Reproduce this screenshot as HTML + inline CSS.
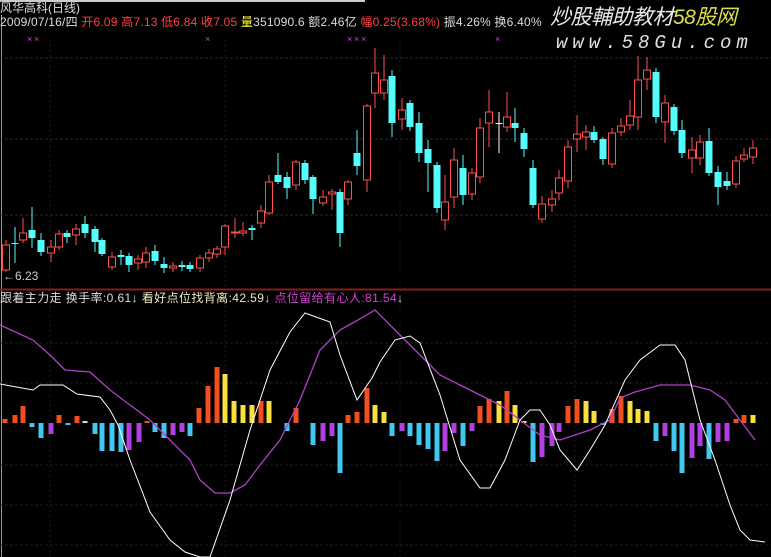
<!DOCTYPE html>
<html><head><meta charset="utf-8"><style>
html,body{margin:0;padding:0;background:#000;width:771px;height:557px;overflow:hidden}
body{position:relative;font-family:"Liberation Sans","Noto Sans CJK SC",sans-serif}
.t{position:absolute;font-size:12px;line-height:13px;white-space:nowrap;color:#ddd}
.r{color:#ff4040}.y{color:#ffff40}.m{color:#d040d0}
</style></head><body>
<svg id="s" width="771" height="557" style="position:absolute;left:0;top:0" xmlns="http://www.w3.org/2000/svg"></svg>
<div class="t" style="left:0;top:2px;background:#000">风华高科(日线)</div>
<div class="t" style="left:0;top:16px;letter-spacing:0.2px">2009/07/16/四 <span class="r">开6.09 高7.13 低6.84 收7.05</span> <span class="y">量</span>351090.6 额2.46亿 <span class="r">幅0.25(3.68%)</span> 振4.26% 换6.40% 还
</div>
<div style="position:absolute;left:545px;top:0;width:226px;height:56px;background:#000"></div>
<div class="t" style="left:3px;top:270px;color:#ccc">←6.23</div>
<div class="t" style="left:0;top:292px;letter-spacing:0.4px">跟着主力走 换手率:0.61<span style="color:#aee">↓</span> <span style="color:#eee8c0">看好点位找背离:42.59</span><span style="color:#aee">↓</span> <span class="m">点位留给有心人:81.54</span><span style="color:#aee">↓</span></div>
<div class="t" style="left:550px;top:6px;font-size:21px;line-height:24px;font-style:italic;color:#e8e8e8;letter-spacing:-0.5px">炒股輔助教材<span style="color:#d8e050">58股网</span></div>
<div class="t" style="left:556px;top:33px;font-size:19px;line-height:20px;font-style:italic;color:#e0e0e0;letter-spacing:5px;font-family:'Liberation Mono',monospace">www.58Gu.com</div>
<script>
var s=document.getElementById('s'),h='';
function L(x1,y1,x2,y2,c,w,d){h+='<line x1="'+x1+'" y1="'+y1+'" x2="'+x2+'" y2="'+y2+'" stroke="'+c+'" stroke-width="'+(w||1)+'"'+(d?' stroke-dasharray="'+d+'"':'')+'/>';}
h+='<rect x="0" y="0" width="365" height="2" fill="#ccc"/>';
L(1.5,0,1.5,557,'#999',1);
[58,139,215].forEach(function(y){L(0,y,771,y,'#2a2a2a',1,'3,2')});
[343,383,465,505,545].forEach(function(y){L(0,y,771,y,'#1e1e1e',1,'3,2')});
[50,225,400,575].forEach(function(x){L(x,40,x,557,'#1a1a1a',1,'2,3')});
L(0,289.5,771,289.5,'#802020',2);
var C=[[6,245,270,'r',240,272],[15,243,244,'c',227,263],[23,233,240,'r',218,243],[32,230,238,'c',207,248],[41,240,252,'c',233,256],[51,247,253,'r',240,262],[59,234,247,'r',230,250],[67,233,237,'c',230,243],[76,229,235,'r',224,245],[85,224,233,'c',216,238],[95,229,242,'c',226,252],[102,240,254,'c',238,256],[112,257,267,'r',252,270],[121,255,257,'c',250,265],[129,256,265,'c',253,272],[138,259,263,'r',255,270],[146,253,262,'r',247,268],[155,251,261,'c',245,265],[164,264,268,'c',257,273],[173,266,268,'r',262,272],[182,265,267,'c',261,271],[190,265,269,'c',262,272],[200,258,268,'r',255,272],[209,253,258,'r',249,262],[217,249,254,'r',246,258],[225,226,247,'r',224,255],[235,232,233,'r',218,238],[243,231,233,'r',222,236],[252,228,230,'c',225,240],[261,211,223,'r',205,228],[269,182,213,'r',175,215],[278,175,182,'c',153,184],[287,177,188,'c',172,199],[296,162,185,'r',160,190],[305,163,180,'c',160,184],[313,177,199,'c',175,214],[323,197,203,'r',190,206],[332,192,194,'r',189,210],[340,192,233,'c',189,247],[348,182,199,'r',180,205],[357,153,166,'c',130,175],[367,106,180,'r',104,192],[375,73,93,'r',48,108],[384,80,93,'r',55,100],[392,76,123,'c',70,137],[402,110,119,'r',98,130],[410,103,127,'c',100,131],[419,123,153,'c',112,162],[428,149,163,'c',140,192],[437,165,208,'c',162,213],[445,202,220,'r',175,230],[454,160,197,'r',148,208],[463,168,195,'c',155,205],[472,173,194,'r',168,200],[480,128,177,'r',118,183],[489,112,123,'r',90,147],[499,123,124,'w',112,153],[507,117,127,'r',92,132],[515,123,128,'c',108,142],[524,133,149,'c',128,157],[533,168,205,'c',160,208],[542,204,219,'r',196,223],[552,199,205,'r',190,212],[559,178,193,'r',170,200],[568,147,181,'r',140,188],[577,134,139,'r',115,152],[586,132,137,'r',125,150],[594,132,140,'c',126,143],[603,139,159,'c',137,165],[612,133,164,'r',128,168],[621,126,132,'r',118,136],[630,116,125,'r',100,130],[638,80,117,'r',56,130],[647,70,79,'r',57,90],[656,72,117,'c',68,123],[665,103,122,'r',95,143],[674,107,131,'c',104,135],[682,130,153,'c',120,158],[692,150,158,'r',137,173],[700,142,158,'r',135,165],[709,141,173,'c',128,176],[718,172,187,'c',166,205],[727,181,186,'c',172,190],[736,161,184,'r',156,188],[744,155,159,'r',148,162],[753,148,157,'r',140,164]];
C.forEach(function(c){var x=c[0],col=c[3]=='r'?'#ff5050':c[3]=='c'?'#54fcfc':'#fff';
L(x,c[4],x,c[5],col,1);
var hh=Math.max(1,c[2]-c[1]);
if(c[3]=='r')h+='<rect x="'+(x-3.5)+'" y="'+c[1]+'" width="7" height="'+hh+'" fill="#000" stroke="'+col+'" stroke-width="1"/>';
else h+='<rect x="'+(x-3.5)+'" y="'+c[1]+'" width="7" height="'+hh+'" fill="'+col+'"/>';});
var B=[[5,4,'r'],[15,8,'r'],[23,17,'r'],[32,-4,'c'],[41,-15,'c'],[51,-11,'m'],[59,8,'r'],[68,-2,'c'],[77,7,'r'],[85,2,'w'],[95,-11,'c'],[102,-28,'c'],[112,-28,'c'],[121,-29,'c'],[129,-27,'m'],[139,-19,'m'],[147,2,'r'],[155,-9,'c'],[164,-15,'c'],[173,-12,'m'],[182,-9,'m'],[190,-13,'c'],[199,15,'r'],[208,37,'r'],[217,56,'r'],[225,49,'y'],[234,22,'y'],[243,18,'y'],[252,18,'y'],[261,22,'r'],[269,22,'y'],[287,-8,'c'],[296,15,'r'],[313,-22,'c'],[323,-18,'m'],[332,-13,'m'],[340,-50,'c'],[348,8,'r'],[357,11,'r'],[367,35,'r'],[375,18,'y'],[384,11,'y'],[392,-13,'c'],[402,-8,'m'],[410,-13,'c'],[419,-22,'c'],[428,-26,'c'],[437,-38,'c'],[445,-28,'m'],[454,-10,'m'],[463,-23,'c'],[472,-8,'m'],[480,17,'r'],[489,24,'r'],[499,22,'y'],[507,32,'r'],[515,18,'y'],[524,2,'y'],[533,-39,'c'],[542,-34,'m'],[552,-23,'m'],[559,-9,'m'],[568,17,'r'],[577,24,'r'],[586,22,'y'],[594,12,'y'],[603,-2,'c'],[612,14,'r'],[621,27,'r'],[630,22,'y'],[638,14,'y'],[647,12,'y'],[656,-18,'c'],[665,-13,'m'],[674,-28,'c'],[682,-50,'c'],[692,-35,'m'],[700,-23,'m'],[709,-36,'c'],[718,-19,'m'],[727,-18,'m'],[736,4,'r'],[744,8,'r'],[753,8,'y']];
var Z=423,col={r:'#f05020',y:'#f8e040',c:'#40c8f0',m:'#b040e0',w:'#ddd'};
B.forEach(function(b){var y=b[1]>0?Z-b[1]:Z,hh=Math.abs(b[1]);h+='<rect x="'+(b[0]-2.5)+'" y="'+y+'" width="5" height="'+hh+'" fill="'+col[b[2]]+'"/>';});
var P=[[0,325],[33,340],[50,355],[65,370],[90,372],[110,390],[130,405],[150,420],[170,440],[190,460],[200,480],[215,493],[230,493],[245,485],[260,465],[280,440],[300,400],[320,350],[340,330],[358,320],[375,310],[400,335],[420,355],[440,375],[460,385],[480,395],[500,405],[520,420],[540,435],[560,440],[590,430],[610,420],[620,398],[635,392],[660,385],[690,385],[710,390],[725,400],[740,420],[755,440]];
h+='<polyline fill="none" stroke="#b040c8" stroke-width="1.3" points="'+P.join(' ')+'"/>';
var W=[[0,384],[33,390],[40,385],[63,385],[77,394],[100,397],[110,410],[118,425],[130,460],[150,512],[170,540],[185,552],[200,557],[210,557],[230,500],[250,430],[270,370],[290,332],[305,313],[330,322],[340,355],[357,400],[372,378],[380,362],[395,340],[410,336],[420,343],[440,395],[460,460],[480,488],[490,488],[505,460],[520,420],[530,410],[540,410],[550,425],[560,450],[577,470],[590,450],[605,425],[625,380],[640,360],[660,345],[675,345],[685,360],[700,420],[715,460],[730,505],[740,530],[750,540],[765,542]];
h+='<polyline fill="none" stroke="#fff" stroke-width="1" points="'+W.join(' ')+'"/>';
[30,37,208,350,357,364,498].forEach(function(x){h+='<text x="'+(x-3)+'" y="42" fill="#d040d0" font-size="9" font-family="Liberation Sans">×</text>'});
s.innerHTML=h;
</script>
</body></html>
